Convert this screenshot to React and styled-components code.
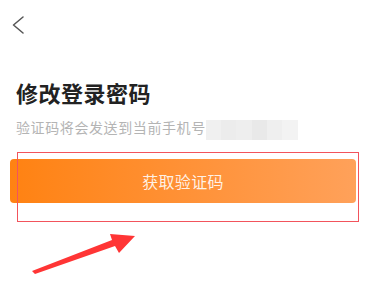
import React from 'react';
import styled, { createGlobalStyle } from 'styled-components';

const GlobalStyle = createGlobalStyle`
  html, body {
    margin: 0;
    padding: 0;
    background: #fff;
  }
  body {
    font-family: "Noto Sans CJK SC", "Noto Sans", sans-serif;
  }
`;

const Page = styled.div`
  position: relative;
  width: 372px;
  height: 281px;
  overflow: hidden;
  background: #fff;
`;

const Header = styled.div`
  height: 50px;
  display: flex;
  align-items: flex-start;
  padding: 16px 0 0 12px;
  box-sizing: border-box;
`;

const BackButton = styled.button`
  border: none;
  background: none;
  padding: 0;
  width: 14px;
  height: 18px;
  cursor: pointer;
  display: flex;
`;

const Content = styled.div`
  padding: 28px 16px 0 16px;
`;

const Title = styled.h1`
  margin: 0;
  font-size: 22px;
  line-height: 28px;
  font-weight: 700;
  color: #222;
  letter-spacing: 0.5px;
`;

const HintRow = styled.div`
  margin-top: 11px;
  display: flex;
  align-items: flex-start;
`;

const Hint = styled.span`
  font-size: 14px;
  line-height: 20px;
  color: #b4b4b4;
  letter-spacing: 0.6px;
`;

const MaskedPhone = styled.div`
  margin-top: 3px;
  width: 92px;
  height: 20px;
  display: flex;
`;

const MaskCell = styled.div`
  flex: 1;
  background: ${(p) => p.$shade};
`;

const CodeButton = styled.button`
  display: block;
  margin: 19px 16px 0 10px;
  width: 346px;
  height: 44px;
  border: none;
  border-radius: 4px;
  background: linear-gradient(90deg, #ff8212 0%, #ff9136 50%, #ffa15a 100%);
  color: rgba(255, 255, 255, 0.88);
  font-family: "Noto Sans CJK SC", "Noto Sans", sans-serif;
  font-size: 16px;
  letter-spacing: 0.3px;
  cursor: pointer;
`;

const Highlight = styled.div`
  position: absolute;
  left: 17px;
  top: 152px;
  width: 342px;
  height: 70px;
  box-sizing: border-box;
  border: 1.5px solid #f2545c;
  pointer-events: none;
`;

const Pointer = styled.svg`
  position: absolute;
  left: 0;
  top: 0;
  pointer-events: none;
`;

const shades = ['#f0f0f0', '#ececec', '#eeeeee', '#e9e9e9', '#efefef', '#f3f3f3'];

export default function App() {
  return (
    <Page>
      <GlobalStyle />
      <Header>
        <BackButton aria-label="back">
          <svg width="14" height="18" viewBox="0 0 14 18">
            <polyline
              points="11,1 1.5,9 11,17"
              fill="none"
              stroke="#555"
              strokeWidth="1.5"
              strokeLinecap="round"
              strokeLinejoin="round"
            />
          </svg>
        </BackButton>
      </Header>
      <Content>
        <Title>修改登录密码</Title>
        <HintRow>
          <Hint>验证码将会发送到当前手机号</Hint>
          <MaskedPhone>
            {shades.map((s, i) => (
              <MaskCell key={i} $shade={s} />
            ))}
          </MaskedPhone>
        </HintRow>
      </Content>
      <CodeButton>获取验证码</CodeButton>
      <Highlight />
      <Pointer width="372" height="281" viewBox="0 0 372 281">
        <polygon
          points="32,271 112,240 110,234 135,236 119,253 115,246 35,274"
          fill="#ff3535"
        />
      </Pointer>
    </Page>
  );
}
